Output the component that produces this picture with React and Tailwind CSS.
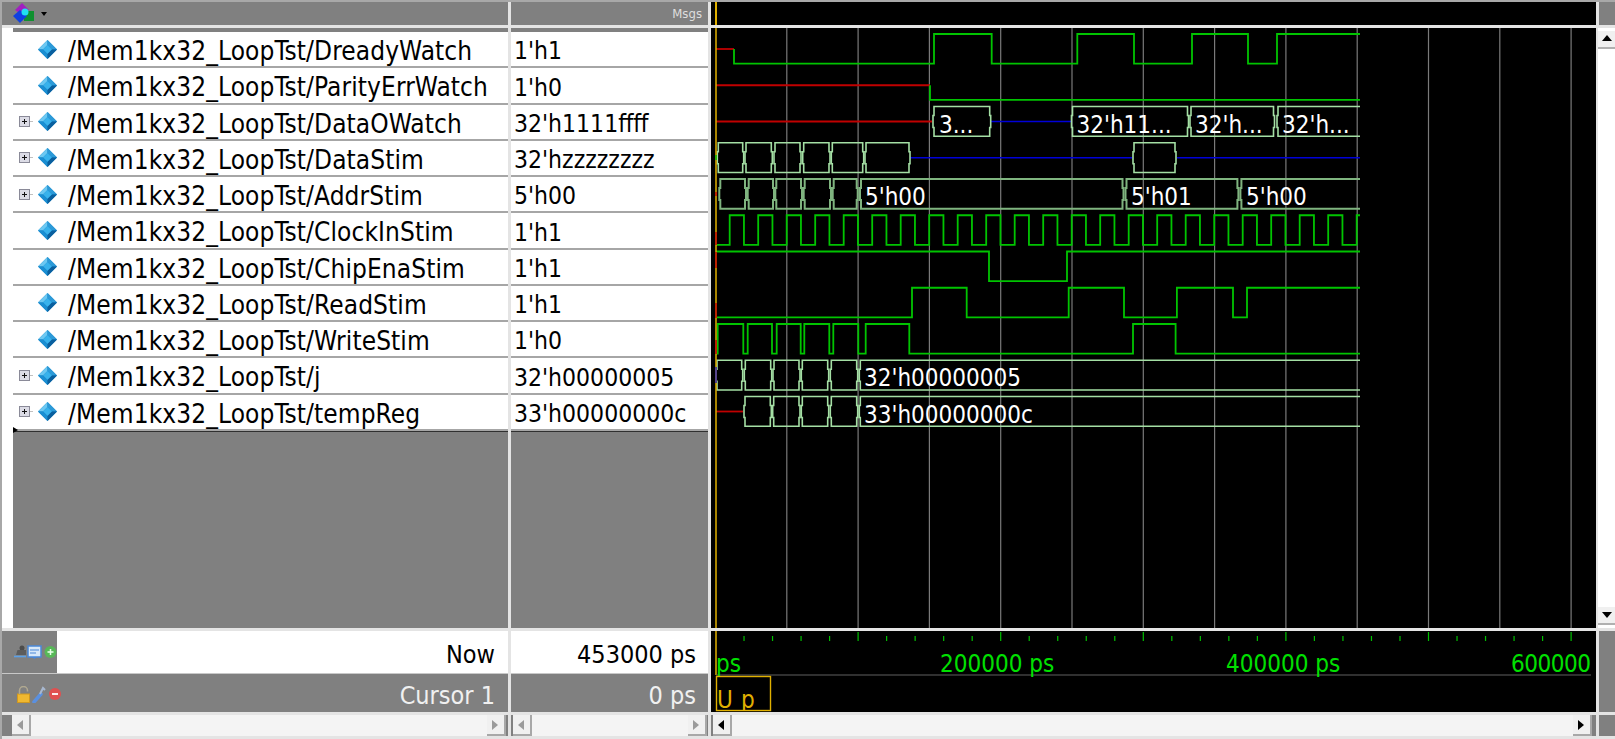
import React from 'react';

const ROW = 36.25;
const hi = (i) => 34 + ROW * i;
const lo = (i) => 63.7 + ROW * i;
const mid = (i) => 49 + ROW * i;
const END = 1360;

const signals = [
  { name: '/Mem1kx32_LoopTst/DreadyWatch', value: "1'h1" },
  { name: '/Mem1kx32_LoopTst/ParityErrWatch', value: "1'h0" },
  { name: '/Mem1kx32_LoopTst/DataOWatch', value: "32'h1111ffff", bus: true },
  { name: '/Mem1kx32_LoopTst/DataStim', value: "32'hzzzzzzzz", bus: true },
  { name: '/Mem1kx32_LoopTst/AddrStim', value: "5'h00", bus: true },
  { name: '/Mem1kx32_LoopTst/ClockInStim', value: "1'h1" },
  { name: '/Mem1kx32_LoopTst/ChipEnaStim', value: "1'h1" },
  { name: '/Mem1kx32_LoopTst/ReadStim', value: "1'h1" },
  { name: '/Mem1kx32_LoopTst/WriteStim', value: "1'h0" },
  { name: '/Mem1kx32_LoopTst/j', value: "32'h00000005", bus: true },
  { name: '/Mem1kx32_LoopTst/tempReg', value: "33'h00000000c", bus: true },
];

// digital trace: starts at level, flips at every edge
const digital = (i, start, startHigh, edges) => {
  let up = startHigh;
  let d = `M${start} ${up ? hi(i) : lo(i)}`;
  edges.forEach((x) => {
    up = !up;
    d += ` H${x} V${up ? hi(i) : lo(i)}`;
  });
  return d + ` H${END}`;
};

const box = (i, a, b) => {
  const t = hi(i);
  const m = mid(i);
  const l = lo(i);
  return `M${a + 1} ${t} H${b - 1} V${m - 6} H${b} V${m + 6} H${b - 1} V${l} H${a + 1} V${m + 6} H${a} V${m - 6} H${a + 1} Z`;
};

const openBox = (i, a) => {
  const m = mid(i);
  return `M${END} ${hi(i)} H${a + 1} V${m - 6} H${a} V${m + 6} H${a + 1} V${lo(i)} H${END}`;
};

const clockEdges = [];
for (let n = 0; n < 23; n++) {
  clockEdges.push(729.7 + 28.5 * n);
  if (n < 22) clockEdges.push(729.7 + 28.5 * n + 14.25);
}

const grid = [];
for (let n = 1; n <= 12; n++) grid.push(715.5 + 71.3 * n);

const ticks = [];
for (let n = 1; n <= 30; n++) ticks.push({ x: 715.5 + 28.52 * n, major: n % 5 === 0 });

const Waves = () => {
  const bright = '#a4dfa4';
  const dim = '#7fb47f';
  return (
    <svg className="block w-full h-full" viewBox="711 28 885 600" fill="none">
      {grid.map((x) => (
        <line key={x} x1={x} x2={x} y1={28} y2={628} stroke="#7a7a7a" strokeWidth="1.2" />
      ))}

      <g stroke="#c00000" strokeWidth="1.8">
        <path d={`M716 ${mid(0)} H734`} />
        <path d={`M716 ${mid(1)} H930`} />
        <path d={`M716 ${mid(2)} H932`} />
        <path d={`M716 ${mid(10)} H743`} />
      </g>
      <g stroke="#0000d8" strokeWidth="1.5">
        <path d={`M991 ${mid(2)} H1071`} />
        <path d={`M910 ${mid(3)} H1132`} />
        <path d={`M1177 ${mid(3)} H${END}`} />
      </g>

      <g stroke="#00c400" strokeWidth="1.8">
        <path d={`M734 ${mid(0)} V${lo(0)} H934 V${hi(0)} H991.7 V${lo(0)} H1077.3 V${hi(0)} H1134 V${lo(0)} H1192 V${hi(0)} H1248 V${lo(0)} H1277 V${hi(0)} H${END}`} />
        <path d={`M930 ${mid(1)} V${lo(1)} H${END}`} />
        <path d={digital(5, 716, false, clockEdges)} />
        <path d={digital(6, 716, true, [989, 1067])} />
        <path d={digital(7, 716, false, [912, 966.7, 1068.7, 1124, 1176.9, 1233, 1247])} />
        <path d={digital(8, 716, false, [717.7, 743.3, 747.7, 772, 776.7, 800.7, 804.3, 829.3, 833.3, 858.3, 865.7, 909.3, 1133, 1175.6])} />
      </g>

      <g stroke={bright} strokeWidth="1.6">
        <path d={box(2, 933, 990.7)} />
        <path d={box(2, 1071.5, 1188.5)} />
        <path d={box(2, 1190, 1274.5)} />
        <path d={openBox(2, 1277)} />
        {[[717.3, 743.7], [745, 772.3], [774, 801], [802.7, 830], [831.3, 863.7], [865, 910], [1133, 1176]].map(([a, b]) => (
          <path key={a} d={box(3, a, b)} />
        ))}
        {[[716, 742.7], [744.3, 771.7], [773, 800], [801.3, 828.7], [830.3, 857.7]].map(([a, b]) => (
          <path key={a} d={box(9, a, b)} />
        ))}
        <path d={openBox(9, 859.3)} />
        {[[744, 771.3], [772.7, 800], [801.3, 828.7], [830.3, 857.7]].map(([a, b]) => (
          <path key={a} d={box(10, a, b)} />
        ))}
        <path d={openBox(10, 859.3)} />
      </g>
      <g stroke={dim} strokeWidth="2">
        {[[719.3, 746], [747.7, 774], [775.3, 802], [803.7, 831], [832.7, 857.7], [860, 1123.5], [1125.5, 1238.4]].map(([a, b]) => (
          <path key={a} d={box(4, a, b)} />
        ))}
        <path d={openBox(4, 1240.4)} />
      </g>

      <g className="fill-white text-[24px]">
        <text x="939" y={lo(2) - 3.7}>3...</text>
        <text x="1076.5" y={lo(2) - 3.7}>32'h11...</text>
        <text x="1195" y={lo(2) - 3.7}>32'h...</text>
        <text x="1282" y={lo(2) - 3.7}>32'h...</text>
        <text x="865" y={lo(4) - 3.7}>5'h00</text>
        <text x="1131" y={lo(4) - 3.7}>5'h01</text>
        <text x="1246" y={lo(4) - 3.7}>5'h00</text>
        <text x="864" y={lo(9) - 3.7}>32'h00000005</text>
        <text x="864" y={lo(10) - 3.7}>33'h00000000c</text>
      </g>

      <line x1="716" x2="716" y1="28" y2="628" stroke="#e0b000" strokeWidth="1.5" />
      <g strokeWidth="1.5">
        <path d="M716 232 V245 M716 252 V268 M716 303 V318 M716 340 V354" stroke="#c00000" />
        <path d="M716 367 V383" stroke="#3020b0" />
        <path d="M716 155 V160" stroke="#00c000" />
        <path d="M716 192 V196" stroke="#c00000" />
      </g>
    </svg>
  );
};

const Ruler = () => (
  <svg className="block w-full h-full" viewBox="711 631 885 81" fill="none">
    <line x1="716" x2="716" y1="631" y2="675" stroke="#e0b000" strokeWidth="1.5" />
    {ticks.map((t) => (
      <line key={t.x} x1={t.x} x2={t.x} y1={t.major ? 632 : 636} y2={641} stroke="#00c000" strokeWidth="1.2" />
    ))}
    <line x1="716" x2="1591" y1="675" y2="675" stroke="#606060" strokeWidth="1.2" />
    <g className="fill-[#00e000] text-[24px]">
      <text x="716" y="672">ps</text>
      <text x="940" y="672">200000 ps</text>
      <text x="1226" y="672">400000 ps</text>
      <text x="1511" y="672" textLength="80">600000</text>
    </g>
    <text x="717" y="707.5" className="fill-[#e0b000] text-[24px]">U</text>
    <text x="741" y="707.5" className="fill-[#e0b000] text-[24px]">p</text>
    <rect x="711" y="711" width="70" height="1" fill="#000" />
    <rect x="716.5" y="676.5" width="54" height="34" stroke="#e0b000" strokeWidth="1.4" />
  </svg>
);

const Diamond = () => (
  <svg width="19" height="19" viewBox="0 0 19 19" className="shrink-0">
    <path d="M9.5 0 L19 9.5 L9.5 19 L0 9.5 Z" fill="#0f7fc4" />
    <path d="M9.5 0 L0 9.5 L5 9.5 L9.5 5 Z" fill="#6cc8f2" />
    <path d="M9.5 0 L19 9.5 L14 9.5 L9.5 5 Z" fill="#2c9ad8" />
    <path d="M9.5 5 L14 9.5 L9.5 14 L5 9.5 Z" fill="#38b2ec" />
    <path d="M0 9.5 L9.5 19 L9.5 14 L5 9.5 Z" fill="#1a8ed2" />
    <path d="M19 9.5 L9.5 19 L9.5 14 L14 9.5 Z" fill="#0a5f9e" />
  </svg>
);

const Expand = () => (
  <svg width="14" height="11" viewBox="0 0 14 11" className="shrink-0">
    <rect x="0.5" y="0.5" width="10" height="10" fill="#dcdce6" stroke="#8a8a98" />
    <path d="M3 5.5 H8 M5.5 3 V8" stroke="#111" />
    <path d="M11 5.5 H14" stroke="#c0c0c0" />
  </svg>
);

const NameRow = ({ sig }) => (
  <div className="h-[36.25px] border-b-2 border-[#a6a6a6] bg-white flex items-center text-[26px] tracking-[0.1px] text-black whitespace-nowrap overflow-hidden">
    <div className="w-[19px] ml-[6px] flex justify-start shrink-0">{sig.bus && <Expand />}</div>
    <Diamond />
    <span className="ml-[11px] pt-[5px]">{sig.name}</span>
  </div>
);

const ValueRow = ({ sig }) => (
  <div className="h-[36.25px] border-b-2 border-[#a6a6a6] bg-white flex items-center pl-[3px] pt-[5px] text-[24.5px] text-black whitespace-nowrap overflow-hidden">
    {sig.value}
  </div>
);

const Arrow = ({ dir, dark }) => {
  const d = { left: 'M8 1 L2 6 L8 11 Z', right: 'M2 1 L8 6 L2 11 Z', up: 'M1 8 L6 2 L11 8 Z', down: 'M1 3 L6 9 L11 3 Z' }[dir];
  return (
    <svg width="12" height="12" viewBox="0 0 12 12">
      <path d={d} fill={dark ? '#000' : '#9a9a9a'} />
    </svg>
  );
};

const ScrollBtn = ({ dir, dark }) => (
  <div className="w-[19px] h-[21px] bg-[#f0f0f0] border-r-2 border-b-2 border-[#a8a8a8] flex items-center justify-center shrink-0">
    <Arrow dir={dir} dark={dark} />
  </div>
);

const HScroll = ({ dark, pad }) => (
  <div className={`h-[21px] bg-[#808080] flex ${pad}`}>
    <ScrollBtn dir="left" dark={dark} />
    <div className="flex-1 bg-[#f4f4f4]" />
    <ScrollBtn dir="right" dark={dark} />
  </div>
);

const HeaderIcon = () => (
  <svg width="24" height="21" viewBox="0 0 24 21">
    <path d="M6 3 L9 0 L16 7 L9 12 L2 7 Z" fill="#a020c0" />
    <rect x="11" y="8" width="10" height="10" fill="#109030" />
    <path d="M7 7 L14 13 L7 20 L0 13 Z" fill="#1040e0" />
    <circle cx="12" cy="9" r="3.5" fill="#20e0f0" />
  </svg>
);

const NowIcons = () => (
  <svg width="44" height="15" viewBox="0 0 44 15" className="ml-[11px] shrink-0">
    <circle cx="9" cy="3" r="2.5" fill="#4c4c4c" />
    <path d="M3 10 L4.5 5 L13 5 L13 10 Z" fill="#5c5c5c" />
    <path d="M1 11.5 H13" stroke="#5aa0e8" strokeWidth="1.6" />
    <rect x="15" y="1" width="13" height="11" fill="#d8e8f8" stroke="#4a88d8" strokeWidth="1.5" />
    <path d="M17 5 H26 M17 8 H23" stroke="#4a88d8" />
    <path d="M19 12 H24 L21.5 14 Z" fill="#4a88d8" />
    <circle cx="37.5" cy="7" r="6" fill="#58b858" />
    <path d="M34.5 7 H40.5 M37.5 4 V10" stroke="#e8ffe8" strokeWidth="1.5" />
  </svg>
);

const CursorIcons = () => (
  <svg width="44" height="17" viewBox="0 0 44 17" className="ml-[15px] shrink-0">
    <rect x="0.5" y="8" width="12" height="8.5" fill="#f0b830" stroke="#d09820" />
    <path d="M2.5 8 V4.5 A4 4 0 0 1 10.5 4.5 V5.5" stroke="#b0a890" strokeWidth="1.5" fill="none" />
    <path d="M17 16 L24 8" stroke="#5a90e0" strokeWidth="3.5" strokeLinecap="round" />
    <path d="M23 8 L26 2 L28 4" stroke="#a8b8d0" strokeWidth="2" fill="none" />
    <circle cx="38" cy="8" r="6" fill="#e05050" />
    <path d="M35 8 H41" stroke="#fff" strokeWidth="1.8" />
  </svg>
);

const App = () => (
  <div className="w-[1615px] h-[739px] overflow-hidden bg-[#e4e4e4] border-t-2 border-l-2 border-[#a8a8a8] font-['DejaVu_Sans_Condensed','DejaVu_Sans',sans-serif] grid grid-cols-[506px_197px_885px_16px] grid-rows-[23px_600px_81px_21px] gap-x-[3px] gap-y-[3px]">
    {/* header */}
    <div className="bg-[#808080] flex items-center pl-[11px] gap-[4px]">
      <HeaderIcon />
      <svg width="6" height="4" viewBox="0 0 6 4"><path d="M0 0 H6 L3 4 Z" fill="#000" /></svg>
    </div>
    <div className="bg-[#808080] flex items-center justify-end pr-[6px] text-[13px] text-[#dedede]">Msgs</div>
    <div className="bg-black pl-[4px]">
      <div className="w-[2px] h-full bg-[#e0b000]" />
    </div>
    <div className="bg-[#808080]" />

    {/* signal names */}
    <div className="bg-white flex relative">
      <div className="w-[11px] shrink-0" />
      <div className="flex-1 flex flex-col">
        <div className="h-[4px] bg-[#808080]" />
        {signals.map((s) => <NameRow key={s.name} sig={s} />)}
        <div className="flex-1 bg-[#808080] border-t border-[#303030]" />
      </div>
      <div className="absolute left-[11px] top-[399px] w-0 h-0 border-y-[3px] border-y-transparent border-l-[5px] border-l-black" />
    </div>

    {/* values */}
    <div className="bg-white flex flex-col">
      <div className="h-[4px] bg-[#808080]" />
      {signals.map((s) => <ValueRow key={s.name} sig={s} />)}
      <div className="flex-1 bg-[#808080] border-t border-[#303030]" />
    </div>

    {/* waveforms */}
    <div className="bg-black"><Waves /></div>

    {/* vertical scrollbar */}
    <div className="bg-white flex flex-col justify-between pt-[3px] pb-[3px] -ml-[1px]">
      <div className="h-[18px] bg-[#f0f0f0] border-b-2 border-[#b0b0b0] flex items-center justify-center"><Arrow dir="up" dark /></div>
      <div className="h-[18px] bg-[#f0f0f0] border-b-2 border-[#b0b0b0] flex items-center justify-center"><Arrow dir="down" dark /></div>
    </div>

    {/* now / cursor names */}
    <div className="flex flex-col bg-[#808080]">
      <div className="h-[43px] flex border-b border-[#c8c8c8]">
        <div className="w-[55px] shrink-0 flex items-center"><NowIcons /></div>
        <div className="flex-1 bg-white flex items-center justify-end pr-[13px] pt-[5px] text-[25px] text-black">Now</div>
      </div>
      <div className="flex-1 flex items-center justify-between pr-[13px] text-[25px] text-[#f0f0f0]">
        <CursorIcons />
        <span className="pt-[3px]">Cursor 1</span>
      </div>
    </div>

    {/* now / cursor values */}
    <div className="flex flex-col bg-[#808080]">
      <div className="h-[43px] bg-white border-b border-[#c8c8c8] flex items-center justify-end pr-[12px] pt-[5px] text-[25px] text-black">453000 ps</div>
      <div className="flex-1 flex items-center justify-end pr-[12px] pt-[3px] text-[25px] text-[#f0f0f0]">0 ps</div>
    </div>

    <div className="bg-black"><Ruler /></div>
    <div className="bg-[#808080]" />

    {/* bottom scrollbars */}
    <HScroll pad="pl-[10px] pr-[2px]" />
    <HScroll pad="pl-[2px] pr-[1px]" />
    <HScroll dark pad="pl-[2px] pr-[4px]" />
    <div className="bg-[#808080]" />
  </div>
);

export default App;
